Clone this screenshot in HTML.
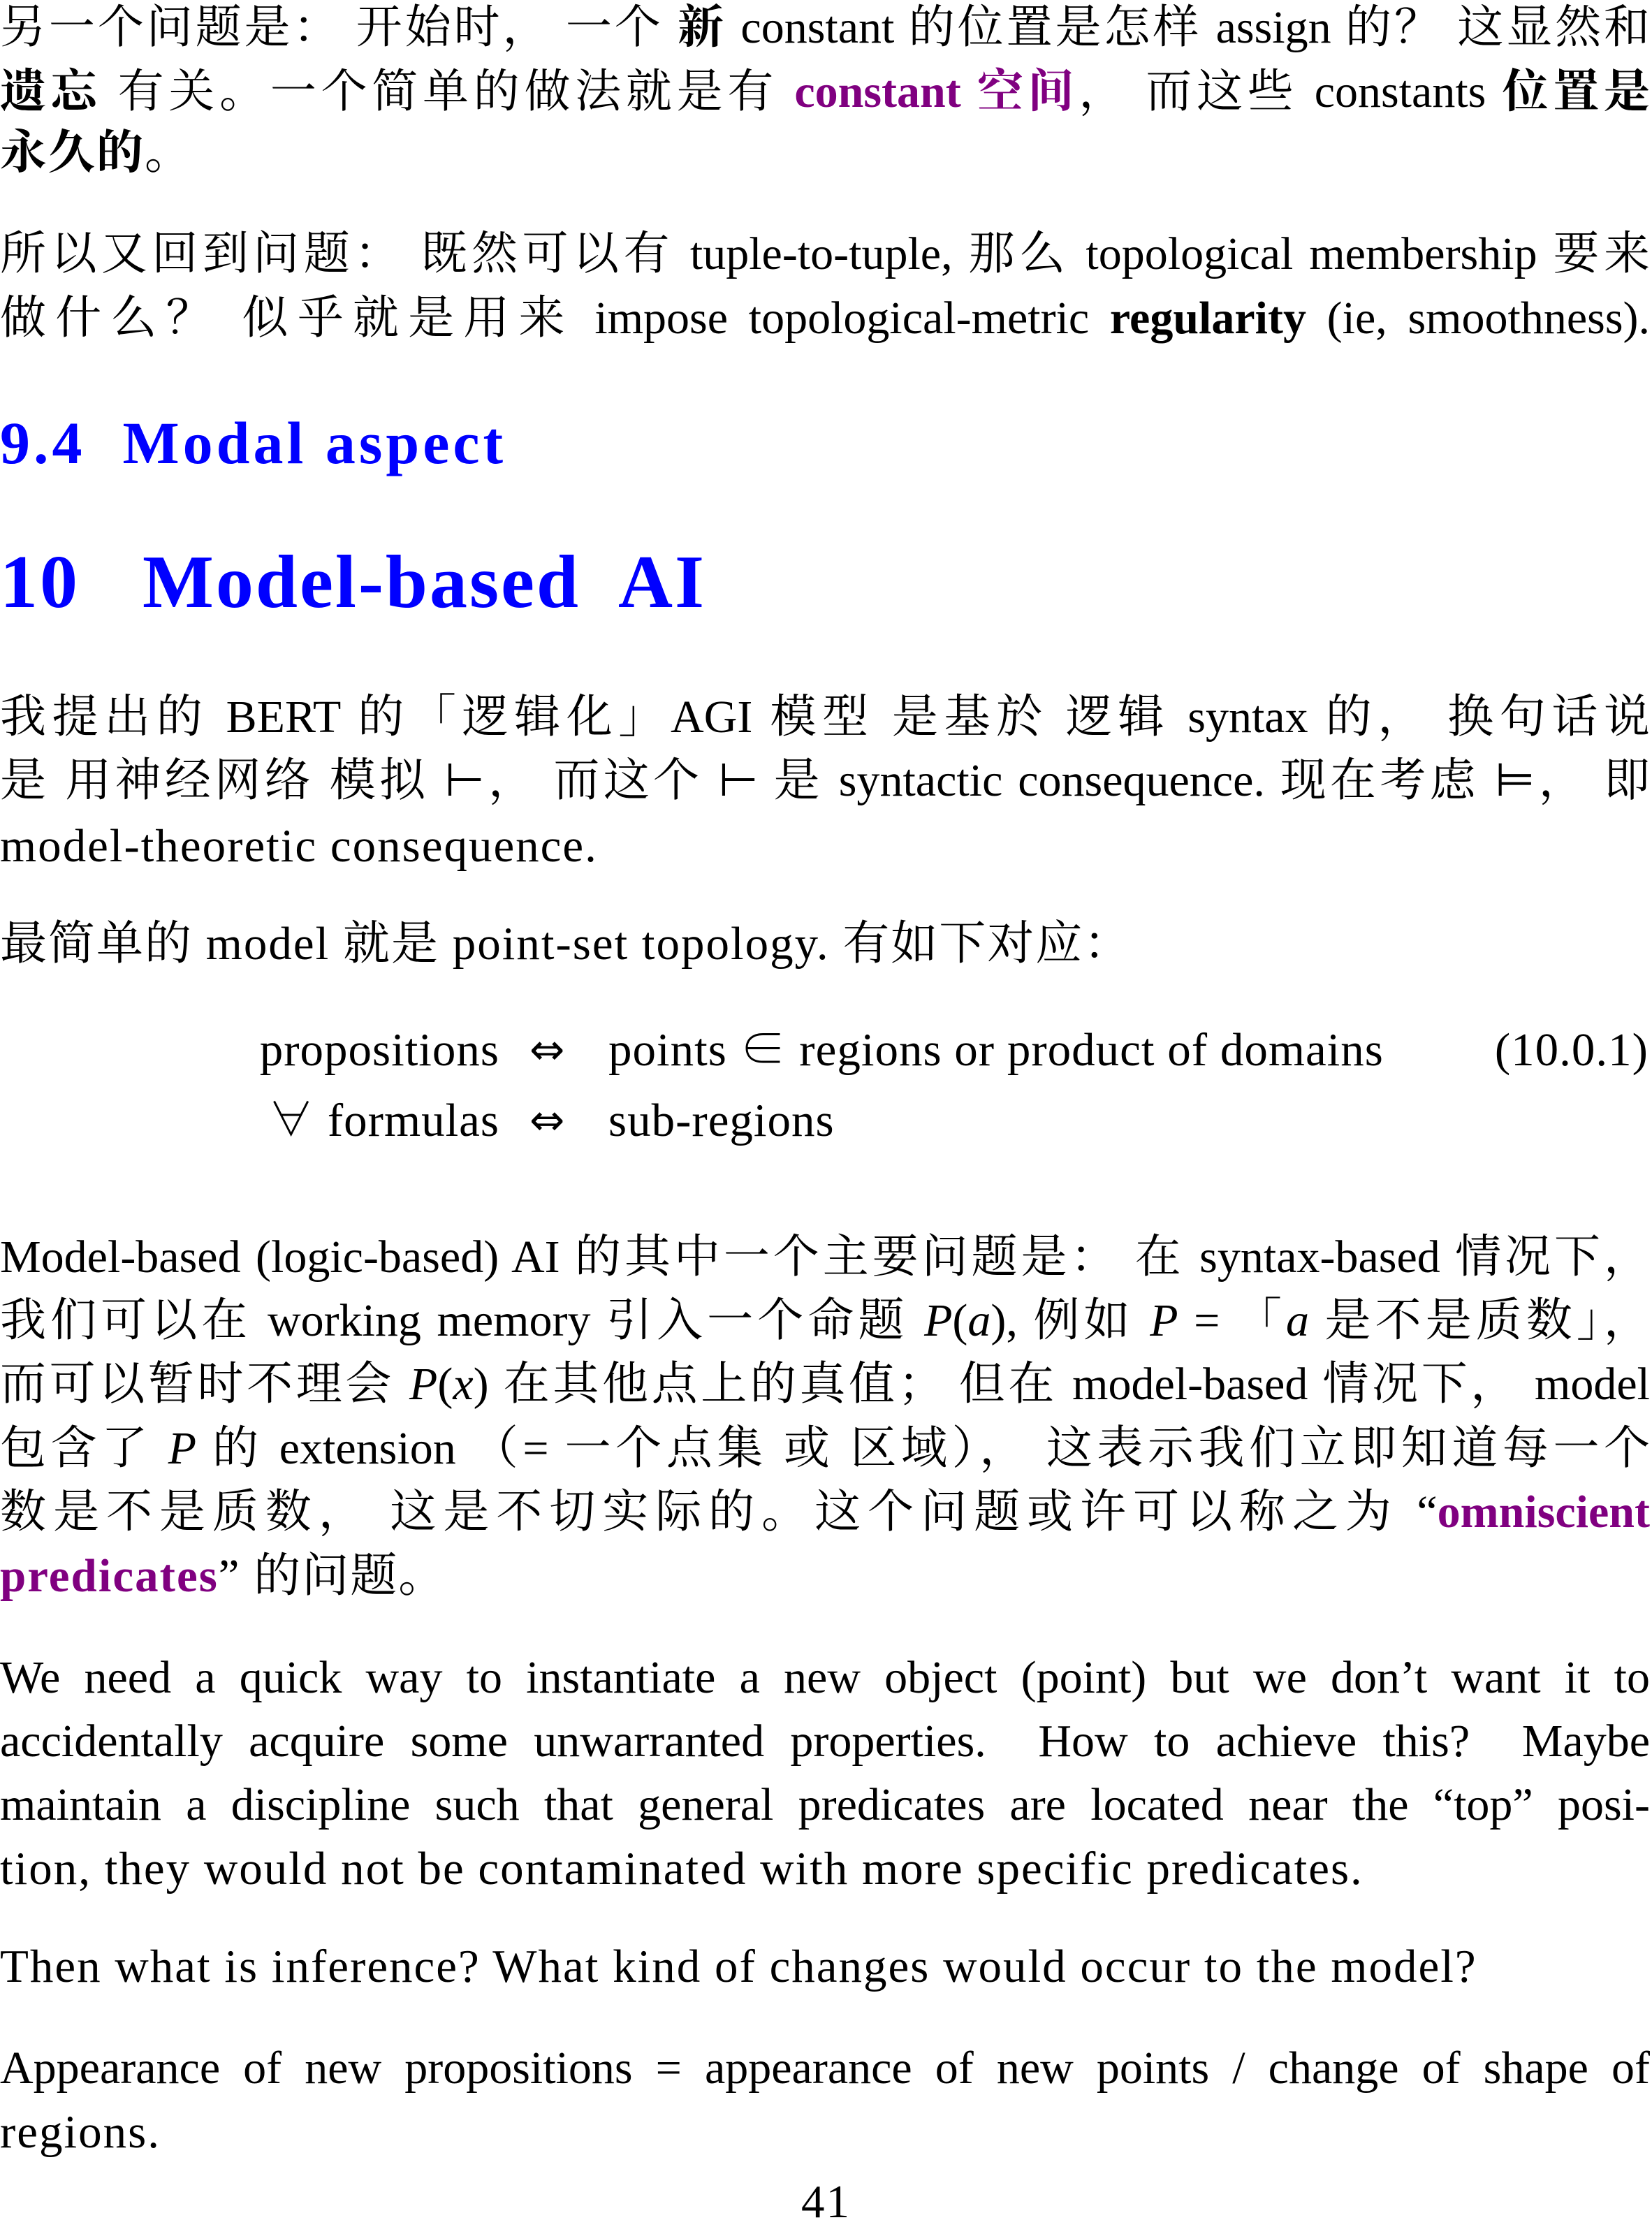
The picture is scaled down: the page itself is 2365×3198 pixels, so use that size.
<!DOCTYPE html>
<html><head><meta charset="utf-8"><style>
html,body{margin:0;padding:0;background:#fff;}
body{width:2365px;height:3178px;position:relative;overflow:hidden;font-family:"Liberation Serif","Noto Serif CJK SC","Noto Sans CJK SC",serif;font-size:67px;letter-spacing:2px;color:#000;}
.l{position:absolute;left:0;width:2362px;height:92px;line-height:92px;white-space:nowrap;}
.j{text-align:justify;text-align-last:justify;white-space:normal;overflow:hidden;letter-spacing:0;font-size:66px;}
.p{color:#800080;font-weight:bold;}
.b{font-weight:bold;}
.h{color:#0000ff;font-weight:bold;}
i{font-style:italic;}
.ar{font-family:"DejaVu Sans",sans-serif;font-size:60px;}
.eq{letter-spacing:1px;}
</style></head><body>
<div class="l j" style="top:-6px">另一个问题是： 开始时， 一个 <span class="b">新</span> constant 的位置是怎样 assign 的？ 这显然和</div>
<div class="l j" style="top:86px"><span class="b">遗忘</span> 有关。一个简单的做法就是有 <span class="p">constant 空间</span>， 而这些 constants <span class="b">位置是</span></div>
<div class="l" style="top:173px"><span class="b">永久的</span>。</div>

<div class="l j" style="top:318px">所以又回到问题： 既然可以有 tuple-to-tuple, 那么 topological membership 要来</div>
<div class="l j" style="top:410px">做什么？ 似乎就是用来 impose topological-metric <span class="b">regularity</span> (ie, smoothness).</div>

<div class="l h" style="top:584px;font-size:86px;letter-spacing:5px;height:100px;line-height:100px">9.4&nbsp; Modal aspect</div>
<div class="l h" style="top:774px;font-size:108px;letter-spacing:3px;height:120px;line-height:120px">10&nbsp;&nbsp; Model-based&nbsp; AI</div>

<div class="l j" style="top:981px">我提出的 BERT 的「逻辑化」AGI 模型 是基於 逻辑 syntax 的， 换句话说</div>
<div class="l j" style="top:1072px">是 用神经网络 模拟 ⊢， 而这个 ⊢ 是 syntactic consequence. 现在考虑 ⊨， 即</div>
<div class="l" style="top:1165px">model-theoretic consequence.</div>

<div class="l" style="top:1305px">最简单的 model 就是 point-set topology. 有如下对应：</div>

<div class="l eq" style="top:1457px;left:0;width:715px;text-align:right">propositions</div>
<div class="l ar" style="top:1457px;left:758px;width:80px">⇔</div>
<div class="l eq" style="top:1457px;left:871px;width:1200px">points ∈ regions or product of domains</div>
<div class="l eq" style="top:1457px;left:0;width:2360px;text-align:right">(10.0.1)</div>
<div class="l eq" style="top:1558px;left:0;width:715px;text-align:right">∀ formulas</div>
<div class="l ar" style="top:1558px;left:758px;width:80px">⇔</div>
<div class="l eq" style="top:1558px;left:871px;width:1200px">sub-regions</div>

<div class="l j" style="top:1754px">Model-based (logic-based) AI 的其中一个主要问题是： 在 syntax-based 情况下，</div>
<div class="l j" style="top:1845px">我们可以在 working memory 引入一个命题 <i>P</i>(<i>a</i>), 例如 <i>P</i> = 「<i>a</i> 是不是质数」，</div>
<div class="l j" style="top:1936px">而可以暂时不理会 <i>P</i>(<i>x</i>) 在其他点上的真值； 但在 model-based 情况下， model</div>
<div class="l j" style="top:2028px">包含了 <i>P</i> 的 extension （= 一个点集 或 区域）， 这表示我们立即知道每一个</div>
<div class="l j" style="top:2119px">数是不是质数， 这是不切实际的。这个问题或许可以称之为 “<span class="p">omniscient</span></div>
<div class="l" style="top:2210px"><span class="p">predicates</span>” 的问题。</div>

<div class="l j" style="top:2356px">We need a quick way to instantiate a new object (point) but we don’t want it to</div>
<div class="l j" style="top:2447px">accidentally acquire some unwarranted properties. &nbsp;How to achieve this? &nbsp;Maybe</div>
<div class="l j" style="top:2538px">maintain a discipline such that general predicates are located near the “top” posi-</div>
<div class="l" style="top:2629px">tion, they would not be contaminated with more specific predicates.</div>

<div class="l" style="top:2769px">Then what is inference? What kind of changes would occur to the model?</div>

<div class="l j" style="top:2915px">Appearance of new propositions = appearance of new points / change of shape of</div>
<div class="l" style="top:3006px">regions.</div>

<div class="l" style="top:3106px;text-align:center;width:2365px">41</div>
</body></html>
